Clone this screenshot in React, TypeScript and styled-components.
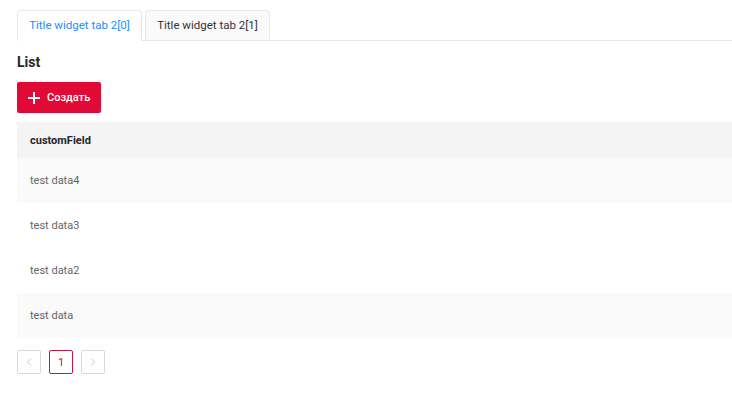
import React from 'react';
import styled, { createGlobalStyle } from 'styled-components';

const GlobalStyle = createGlobalStyle`
  html, body {
    margin: 0;
    padding: 0;
    background: #fff;
    font-family: Roboto, "Liberation Sans", Arial, sans-serif;
  }
`;

const Page = styled.div`
  width: 732px;
  padding: 10px 0 0 17px;
  box-sizing: border-box;
`;

const TabBar = styled.div`
  display: flex;
  gap: 3px;
  border-bottom: 1px solid #e8e8e8;
  height: 30px;
`;

const Tab = styled.div<{ $active?: boolean }>`
  width: 125px;
  height: ${p => (p.$active ? '31px' : '30px')};
  box-sizing: border-box;
  border: 1px solid #e8e8e8;
  border-bottom: ${p => (p.$active ? '1px solid #fff' : 'none')};
  border-radius: 4px 4px 0 0;
  background: ${p => (p.$active ? '#fff' : '#fafafa')};
  color: ${p => (p.$active ? '#1890ff' : '#333')};
  font-size: 11.5px;
  display: flex;
  align-items: center;
  justify-content: center;
  padding-bottom: 1px;
`;

const Title = styled.h2`
  margin: 13px 0 0;
  font-size: 14px;
  font-weight: 700;
  color: #262626;
  line-height: 16px;
`;

const CreateButton = styled.button`
  margin-top: 12px;
  height: 31px;
  width: 84px;
  border: none;
  border-radius: 2px;
  background: #e10a37;
  color: #fff;
  font-family: inherit;
  font-size: 11px;
  font-weight: 500;
  display: flex;
  align-items: center;
  gap: 7px;
  padding: 0 0 0 11px;
  cursor: pointer;
`;

const Table = styled.div`
  margin-top: 9px;
`;

const HeaderRow = styled.div`
  height: 36px;
  background: #f4f4f4;
  display: flex;
  align-items: center;
  padding-left: 13px;
  font-size: 11px;
  font-weight: 700;
  color: #262626;
`;

const Row = styled.div<{ $striped?: boolean }>`
  height: 45px;
  background: ${p => (p.$striped ? '#fafafa' : '#fff')};
  display: flex;
  align-items: center;
  padding-left: 13px;
  font-size: 11px;
  color: #666;
`;

const Pager = styled.div`
  display: flex;
  gap: 8px;
  margin-top: 12px;
`;

const PageItem = styled.div<{ $active?: boolean }>`
  width: 24px;
  height: 24px;
  box-sizing: border-box;
  border: 1px solid ${p => (p.$active ? '#c4163f' : '#d9d9d9')};
  border-radius: 2px;
  display: flex;
  align-items: center;
  justify-content: center;
  font-size: 11px;
  color: ${p => (p.$active ? '#c4163f' : '#bfbfbf')};
`;

const rows = [
  { text: 'test data4', striped: true },
  { text: 'test data3', striped: false },
  { text: 'test data2', striped: false },
  { text: 'test data', striped: true },
];

export default function App() {
  return (
    <Page>
      <GlobalStyle />
      <TabBar>
        <Tab $active>Title widget tab 2[0]</Tab>
        <Tab>Title widget tab 2[1]</Tab>
      </TabBar>
      <Title>List</Title>
      <CreateButton>
        <svg width="12" height="12" viewBox="0 0 12 12">
          <path d="M6 0v12M0 6h12" stroke="#fff" strokeWidth="2" />
        </svg>
        Создать
      </CreateButton>
      <Table>
        <HeaderRow>customField</HeaderRow>
        {rows.map(r => (
          <Row key={r.text} $striped={r.striped}>
            {r.text}
          </Row>
        ))}
      </Table>
      <Pager>
        <PageItem>
          <svg width="6" height="8" viewBox="0 0 6 8">
            <path d="M5 0.5L1.5 4L5 7.5" fill="none" stroke="#c8c8c8" strokeWidth="1" />
          </svg>
        </PageItem>
        <PageItem $active>1</PageItem>
        <PageItem>
          <svg width="6" height="8" viewBox="0 0 6 8">
            <path d="M1 0.5L4.5 4L1 7.5" fill="none" stroke="#c8c8c8" strokeWidth="1" />
          </svg>
        </PageItem>
      </Pager>
    </Page>
  );
}
